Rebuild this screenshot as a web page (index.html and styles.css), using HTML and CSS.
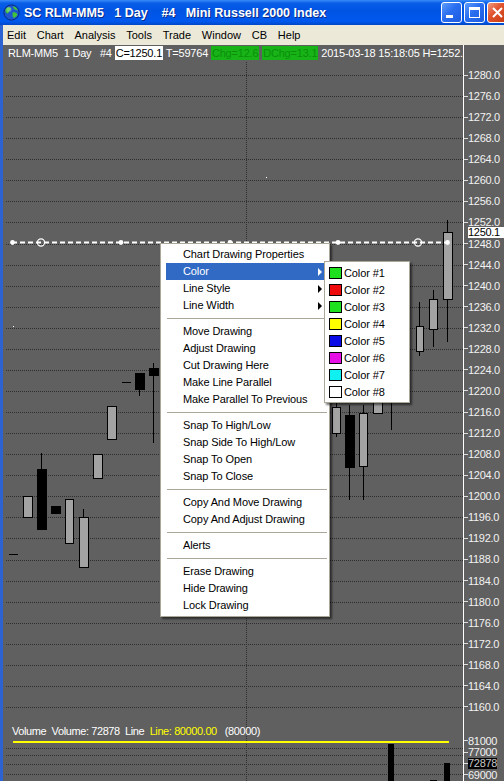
FILE: index.html
```html
<!DOCTYPE html>
<html lang="en">
<head>
    <meta charset="UTF-8">
    <title>SC RLM-MM5 1 Day #4 Mini Russell 2000 Index</title>
    <link rel="stylesheet" href="styles.css">
</head>
<body>
    <div class="window">
        <div class="titlebar">
            <svg class="app-icon" width="17" height="17" viewBox="0 0 17 17">
                <circle cx="8.5" cy="8.5" r="7.6" fill="#1f56d0" stroke="#0b2a7e"/>
                <path d="M3.2 4.2C5 2.6 7.6 3 8.2 5.2 7.6 6.6 5.8 6.6 5.6 8.6 5 10 3.6 9.6 2.6 8 2.3 6.6 2.5 5.2 3.2 4.2Z" fill="#41c23a"/>
                <path d="M9.4 8.8C11.2 7.8 13.6 8.6 14.4 10.6 13.6 12.8 11.6 14.4 10.2 13.4 9.2 12.2 9.8 10.4 9.4 8.8Z" fill="#41c23a"/>
                <path d="M10.2 2.2C12.4 2.6 14 4 14.8 6.2 13 6.4 11.2 5.4 10.2 3.8Z" fill="#41c23a"/>
                <circle cx="6" cy="5.5" r="2.5" fill="#fff" opacity=".25"/>
            </svg>
            <span class="title">SC RLM-MM5   1 Day    #4   Mini Russell 2000 Index</span>
            <div class="caption-buttons">
                <span class="cap-btn cap-min"></span>
                <span class="cap-btn cap-max"></span>
                <span class="cap-btn cap-close">
                    <svg width="19" height="19" viewBox="0 0 19 19"><path d="M5 5L14 14M14 5L5 14" stroke="#fff" stroke-width="2"/></svg>
                </span>
            </div>
        </div>

        <div class="client">
            <div class="menubar">
                <span>Edit</span>
                <span>Chart</span>
                <span>Analysis</span>
                <span>Tools</span>
                <span>Trade</span>
                <span>Window</span>
                <span>CB</span>
                <span>Help</span>
            </div>

            <div class="workspace">
                <div class="plot">
                    <svg class="plot-canvas" width="460" height="736" viewBox="3 45 460 736">
                        <path class="grid" d="M6 75.5H463M6 96.5H463M6 117.5H463M6 138.5H463M6 159.5H463M6 180.5H463M6 201.5H463M6 222.5H463M6 244.5H463M6 265.5H463M6 286.5H463M6 307.5H463M6 328.5H463M6 349.5H463M6 370.5H463M6 391.5H463M6 412.5H463M6 433.5H463M6 454.5H463M6 475.5H463M6 496.5H463M6 517.5H463M6 538.5H463M6 560.5H463M6 581.5H463M6 602.5H463M6 623.5H463M6 644.5H463M6 665.5H463M6 686.5H463M6 707.5H463"/>
                        <path class="grid" d="M6 748.5H463M6 755.5H463M6 764.5H463M6 774.5H463"/>
                        <path class="grid" d="M246.5 62V781"/>

                        <!-- price bars -->
                        <path class="wick" d="M9 554.5H18M122 382.5H131"/>
                        <rect class="up" x="23.5" y="496.5" width="9" height="21"/>
                        <path class="wick" d="M41.5 453V470"/>
                        <rect class="down" x="37.5" y="469.5" width="9" height="60"/>
                        <rect class="down" x="51.5" y="506.5" width="9" height="7"/>
                        <rect class="up" x="65.5" y="499.5" width="8" height="44"/>
                        <path class="wick" d="M83.5 509V518"/>
                        <rect class="up" x="79.5" y="517.5" width="9" height="50"/>
                        <rect class="up" x="93.5" y="454.5" width="9" height="24"/>
                        <rect class="up" x="107.5" y="406.5" width="9" height="33"/>
                        <path class="wick" d="M139.5 373V396"/>
                        <rect class="down" x="135.5" y="373.5" width="9" height="16"/>
                        <path class="wick" d="M153.5 363V443"/>
                        <rect class="down" x="149.5" y="368.5" width="9" height="7"/>

                        <path class="wick" d="M336.5 400V437"/>
                        <rect class="up" x="332.5" y="407.5" width="8" height="26"/>
                        <path class="wick" d="M349.5 405V500"/>
                        <rect class="down" x="345.5" y="415.5" width="9" height="52"/>
                        <path class="wick" d="M363.5 405V500"/>
                        <rect class="up" x="359.5" y="413.5" width="8" height="53"/>
                        <rect class="up" x="373.5" y="380.5" width="9" height="33"/>
                        <path class="wick" d="M391.5 370V430"/>
                        <path class="wick" d="M419.5 302V356"/>
                        <rect class="up" x="416.5" y="326.5" width="7" height="25"/>
                        <path class="wick" d="M433.5 290V347"/>
                        <rect class="up" x="429.5" y="299.5" width="8" height="30"/>
                        <path class="wick" d="M447.5 220V342"/>
                        <rect class="up" x="443.5" y="232.5" width="9" height="67"/>

                        <!-- drawn horizontal line -->
                        <path class="drawing" d="M12 242.5H450"/>
                        <circle class="handle" cx="12.5" cy="242.5" r="2.4"/>
                        <circle class="handle" cx="121" cy="242.5" r="2.4"/>
                        <circle class="handle" cx="230" cy="242.5" r="2.4"/>
                        <circle class="handle" cx="338" cy="242.5" r="2.4"/>
                        <circle class="handle" cx="447.5" cy="242.5" r="2.4"/>
                        <circle class="anchor" cx="41" cy="242.5" r="3.6"/>
                        <circle class="anchor" cx="418" cy="242.5" r="3.6"/>
                        <rect class="speck" x="13" y="326" width="1" height="1"/>
                        <rect class="speck" x="266" y="177" width="1" height="1"/>

                        <!-- volume -->
                        <path class="vol-line" d="M13 742H449"/>
                        <rect class="vol-bar" x="388" y="744" width="6" height="37"/>
                        <rect class="vol-bar" x="430" y="780" width="7" height="1"/>
                        <rect class="vol-bar" x="444" y="763" width="6" height="18"/>
                    </svg>

                    <div class="info">RLM-MM5  1 Day   #4 <span class="close-box">C=1250.1</span> T=59764 <span class="chg">Chg=12.6</span> <span class="chg">DChg=13.1</span> 2015-03-18 15:18:05 H=1252.3</div>
                    <div class="price-pane"></div>
                    <div class="volume-pane">
                        <div class="volume-legend">Volume  Volume: 72878  Line  <span class="line-val">Line: 80000.00</span>   (80000)</div>
                    </div>
                </div>

                <div class="axis">
                    <div class="price-scale">
                        <div class="tick">1280.0</div>
                        <div class="tick">1276.0</div>
                        <div class="tick">1272.0</div>
                        <div class="tick">1268.0</div>
                        <div class="tick">1264.0</div>
                        <div class="tick">1260.0</div>
                        <div class="tick">1256.0</div>
                        <div class="tick">1252.0</div>
                        <div class="tick">1248.0</div>
                        <div class="tick">1244.0</div>
                        <div class="tick">1240.0</div>
                        <div class="tick">1236.0</div>
                        <div class="tick">1232.0</div>
                        <div class="tick">1228.0</div>
                        <div class="tick">1224.0</div>
                        <div class="tick">1220.0</div>
                        <div class="tick">1216.0</div>
                        <div class="tick">1212.0</div>
                        <div class="tick">1208.0</div>
                        <div class="tick">1204.0</div>
                        <div class="tick">1200.0</div>
                        <div class="tick">1196.0</div>
                        <div class="tick">1192.0</div>
                        <div class="tick">1188.0</div>
                        <div class="tick">1184.0</div>
                        <div class="tick">1180.0</div>
                        <div class="tick">1176.0</div>
                        <div class="tick">1172.0</div>
                        <div class="tick">1168.0</div>
                        <div class="tick">1164.0</div>
                        <div class="tick">1160.0</div>
                    </div>
                    <div class="volume-scale">
                        <div class="tick vtick">81000</div>
                        <div class="tick vtick">77000</div>
                        <div class="tick vtick"><span class="last-volume">72878</span></div>
                        <div class="tick vtick">69000</div>
                    </div>
                    <span class="last-price">1250.1</span>
                </div>
            </div>
        </div>

        <div class="context-menu">
            <div class="menu-item">Chart Drawing Properties</div>
            <div class="menu-item has-sub active">Color</div>
            <div class="menu-item has-sub">Line Style</div>
            <div class="menu-item has-sub">Line Width</div>
            <div class="menu-sep"></div>
            <div class="menu-item">Move Drawing</div>
            <div class="menu-item">Adjust Drawing</div>
            <div class="menu-item">Cut Drawing Here</div>
            <div class="menu-item">Make Line Parallel</div>
            <div class="menu-item">Make Parallel To Previous</div>
            <div class="menu-sep"></div>
            <div class="menu-item">Snap To High/Low</div>
            <div class="menu-item">Snap Side To High/Low</div>
            <div class="menu-item">Snap To Open</div>
            <div class="menu-item">Snap To Close</div>
            <div class="menu-sep"></div>
            <div class="menu-item">Copy And Move Drawing</div>
            <div class="menu-item">Copy And Adjust Drawing</div>
            <div class="menu-sep"></div>
            <div class="menu-item">Alerts</div>
            <div class="menu-sep"></div>
            <div class="menu-item">Erase Drawing</div>
            <div class="menu-item">Hide Drawing</div>
            <div class="menu-item">Lock Drawing</div>
        </div>

        <div class="submenu">
            <div class="swatch-item"><span class="swatch" style="background:#1ee01e"></span>Color #1</div>
            <div class="swatch-item"><span class="swatch" style="background:#ee0a0a"></span>Color #2</div>
            <div class="swatch-item"><span class="swatch" style="background:#1ee01e"></span>Color #3</div>
            <div class="swatch-item"><span class="swatch" style="background:#ffff00"></span>Color #4</div>
            <div class="swatch-item"><span class="swatch" style="background:#0a0ae6"></span>Color #5</div>
            <div class="swatch-item"><span class="swatch" style="background:#e610e6"></span>Color #6</div>
            <div class="swatch-item"><span class="swatch" style="background:#10f0f0"></span>Color #7</div>
            <div class="swatch-item"><span class="swatch" style="background:#ffffff"></span>Color #8</div>
        </div>
    </div>
</body>
</html>
```

FILE: styles.css
```css
body {
    margin: 0;
    background: #606060;
    font-family: "Liberation Sans", Arial, sans-serif;
    font-size: 11px;
}
.window {
    position: relative;
    width: 504px;
    height: 781px;
    overflow: hidden;
    display: flex;
    flex-direction: column;
}

/* title bar */
.titlebar {
    height: 25px;
    flex-shrink: 0;
    display: flex;
    align-items: center;
    padding-left: 3px;
    background: linear-gradient(to bottom, #3b8cf7 0, #0a5fe8 3px, #0054e3 40%, #0058ee 85%, #0046c8 100%);
    color: white;
}
.app-icon {
    flex-shrink: 0;
}
.title {
    margin-left: 4px;
    font-weight: bold;
    font-size: 12.5px;
    white-space: pre;
    text-shadow: 1px 1px #0b2a8a;
}
.caption-buttons {
    margin-left: auto;
    margin-right: -4px;
    display: flex;
    gap: 2px;
}
.cap-btn {
    position: relative;
    width: 21px;
    height: 21px;
    box-sizing: border-box;
    border: 1px solid white;
    border-radius: 3px;
    flex-shrink: 0;
    background: linear-gradient(135deg, #5d9cfb 0, #2a6ef0 45%, #1c5ce0 100%);
}
.cap-min::after {
    content: "";
    position: absolute;
    left: 4px;
    bottom: 4px;
    width: 7px;
    height: 3px;
    background: white;
}
.cap-max::after {
    content: "";
    position: absolute;
    left: 4px;
    top: 4px;
    width: 9px;
    height: 7px;
    border: 1px solid white;
    border-top-width: 3px;
}
.cap-close {
    background: linear-gradient(135deg, #f19a80 0, #e0552f 40%, #c8390e 100%);
}
.cap-close svg {
    display: block;
}

/* client area */
.client {
    flex: 1;
    display: flex;
    flex-direction: column;
    border-left: 3px solid #2d62d2;
    box-shadow: inset 1px 0 #8fb0ec;
    min-height: 0;
}
.menubar {
    height: 20px;
    flex-shrink: 0;
    display: flex;
    align-items: center;
    gap: 10.8px;
    padding-left: 4px;
    background: #ece9d8;
    color: black;
}
.workspace {
    flex: 1;
    display: flex;
    background: #606060;
    min-height: 0;
}
.plot {
    position: relative;
    width: 460px;
    display: flex;
    flex-direction: column;
    overflow: hidden;
    color: white;
    letter-spacing: -0.4px;
}
.plot-canvas {
    position: absolute;
    left: 0;
    top: 0;
}
.info {
    position: relative;
    height: 16px;
    line-height: 16px;
    padding-left: 5px;
    white-space: pre;
    letter-spacing: -0.2px;
}
.close-box {
    background: white;
    color: black;
    padding: 1px 1px;
}
.chg {
    background: #17b317;
    color: #0b8f0b;
    padding: 1px 1px;
}
.price-pane {
    flex: 1;
}
.volume-pane {
    height: 56px;
}
.volume-legend {
    position: relative;
    height: 12px;
    line-height: 12px;
    padding-left: 9px;
    white-space: pre;
}
.line-val {
    color: #ffff00;
}

/* chart drawing */
.grid {
    fill: none;
    stroke: #2e2e2e;
    stroke-width: 1;
    stroke-dasharray: 1 1;
}
.wick {
    fill: none;
    stroke: black;
    stroke-width: 1;
}
.up {
    fill: #a3a3a3;
    stroke: black;
    stroke-width: 1;
}
.down {
    fill: black;
    stroke: black;
    stroke-width: 1;
}
.drawing {
    fill: none;
    stroke: white;
    stroke-width: 2;
    stroke-dasharray: 5 3;
}
.handle {
    fill: white;
}
.anchor {
    fill: none;
    stroke: white;
    stroke-width: 1.2;
}
.speck {
    fill: white;
}
.vol-line {
    fill: none;
    stroke: #ffff00;
    stroke-width: 2;
}
.vol-bar {
    fill: black;
}

/* price axis */
.axis {
    position: relative;
    flex: 1;
    border-left: 1px solid white;
    color: #f2f2f2;
    letter-spacing: -0.3px;
}
.price-scale {
    padding-top: 19.5px;
}
.tick {
    height: 21.067px;
    display: flex;
    align-items: center;
    white-space: nowrap;
}
.tick::before {
    content: "";
    width: 4px;
    height: 1px;
    background: #dcdcdc;
    flex-shrink: 0;
}
.volume-scale {
    margin-top: 17.8px;
}
.vtick {
    height: 11.3px;
}
.last-volume {
    background: black;
    color: #c8c8c8;
    line-height: 11px;
}
.last-price {
    position: absolute;
    left: 4px;
    top: 182px;
    width: 36px;
    height: 11px;
    line-height: 11px;
    background: white;
    color: black;
}

/* context menu */
.context-menu,
.submenu {
    position: absolute;
    background: white;
    border: 1px solid #aca899;
    box-shadow: 2px 2px 2px rgba(0, 0, 0, 0.55);
    color: black;
    letter-spacing: -0.1px;
}
.context-menu {
    left: 160px;
    top: 243px;
    width: 170px;
    box-sizing: border-box;
    padding: 2px 0;
}
.menu-item {
    position: relative;
    height: 17px;
    line-height: 17px;
    margin: 0 5px;
    padding-left: 17px;
    white-space: nowrap;
}
.menu-item.has-sub::after {
    content: "";
    position: absolute;
    right: 2px;
    top: 5px;
    border-left: 4px solid black;
    border-top: 4px solid transparent;
    border-bottom: 4px solid transparent;
}
.menu-item.active {
    background: #316ac5;
    color: white;
}
.menu-item.active::after {
    border-left-color: white;
}
.menu-sep {
    height: 1px;
    margin: 4px 2px 4px 6px;
    background: #aca899;
}
.submenu {
    left: 324px;
    top: 261px;
    width: 86px;
    box-sizing: border-box;
    padding: 2px 0;
}
.swatch-item {
    height: 17px;
    display: flex;
    align-items: center;
    padding-left: 4px;
    white-space: nowrap;
}
.swatch {
    width: 13px;
    height: 12px;
    box-sizing: border-box;
    border: 1px solid black;
    margin-right: 2px;
    flex-shrink: 0;
}
```
